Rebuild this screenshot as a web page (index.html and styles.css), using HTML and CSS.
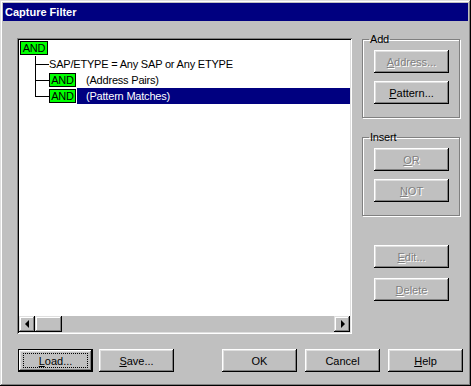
FILE: index.html
```html
<!DOCTYPE html>
<html lang="en">
<head>
    <meta charset="UTF-8">
    <title>Capture Filter</title>
    <link rel="stylesheet" href="styles.css">
</head>
<body>
    <div class="window">
        <header class="titlebar">Capture Filter</header>

        <section class="main">
            <div class="listbox">
                <div class="tree">
                    <div class="row">
                        <span class="op">AND</span>
                    </div>
                    <div class="row child">
                        <span class="branch"></span>
                        <span class="label">SAP/ETYPE = Any SAP or Any ETYPE</span>
                    </div>
                    <div class="row child">
                        <span class="branch"></span>
                        <span class="op">AND</span>
                        <span class="label item">(Address Pairs)</span>
                    </div>
                    <div class="row child last">
                        <span class="branch"></span>
                        <span class="op">AND</span>
                        <span class="label item selected">(Pattern Matches)</span>
                    </div>
                </div>
                <div class="hscroll">
                    <span class="sb-btn"><i class="arrow left"></i></span>
                    <span class="sb-thumb"></span>
                    <span class="sb-track"></span>
                    <span class="sb-btn"><i class="arrow right"></i></span>
                </div>
            </div>

            <aside class="side">
                <fieldset class="group">
                    <legend>Add</legend>
                    <button class="btn" disabled><u>A</u>ddress...</button>
                    <button class="btn"><u>P</u>attern...</button>
                </fieldset>
                <fieldset class="group">
                    <legend>Insert</legend>
                    <button class="btn" disabled><u>O</u>R</button>
                    <button class="btn" disabled><u>N</u>OT</button>
                </fieldset>
                <div class="edit-actions">
                    <button class="btn" disabled><u>E</u>dit...</button>
                    <button class="btn" disabled><u>D</u>elete</button>
                </div>
            </aside>
        </section>

        <footer class="footer">
            <div class="footer-left">
                <button class="btn default"><span class="focus"><u>L</u>oad...</span></button>
                <button class="btn"><u>S</u>ave...</button>
            </div>
            <div class="footer-right">
                <button class="btn">OK</button>
                <button class="btn">Cancel</button>
                <button class="btn"><u>H</u>elp</button>
            </div>
        </footer>
    </div>
</body>
</html>
```

FILE: styles.css
```css
html{
    box-sizing: border-box;
    font-family: "Liberation Sans", Arial, sans-serif;
    font-size: 11px;
    letter-spacing: -0.2px;
}

*, *::after, *::before{
    box-sizing: inherit;
}

body{
    margin: 0;
    background-color: #c0c0c0;
}

u{
    text-decoration: underline;
    text-underline-offset: 1px;
}

.window{
    display: flex;
    flex-direction: column;
    width: 471px;
    height: 386px;
    padding: 3px;
    background-color: #c0c0c0;
    box-shadow: inset -1px -1px #000, inset 1px 1px #dfdfdf, inset -2px -2px #808080, inset 2px 2px #fff;
}

.titlebar{
    height: 18px;
    padding-left: 2px;
    line-height: 18px;
    font-weight: bold;
    letter-spacing: 0;
    color: #fff;
    background-color: #000080;
}

/* listbox + right column */

.main{
    display: flex;
    align-items: flex-start;
    padding: 12px 0 0 14px;
}

.listbox{
    display: flex;
    flex-direction: column;
    width: 335px;
    height: 296px;
    margin-top: 5px;
    padding: 2px;
    background-color: #fff;
    box-shadow: inset 1px 1px #808080, inset -1px -1px #fff, inset 2px 2px #000, inset -2px -2px #dfdfdf;
}

.tree{
    flex-grow: 1;
    padding-left: 1px;
}

.row{
    display: flex;
    align-items: center;
    height: 16px;
    line-height: 16px;
}

.row.child{
    padding-left: 15px;
}

.branch{
    align-self: stretch;
    width: 14px;
    background:
        linear-gradient(#000, #000) 0 0 / 1px 100% no-repeat,
        linear-gradient(#000, #000) 0 8px / 100% 1px no-repeat;
}

.row.last .branch{
    background-size: 1px 9px, 100% 1px;
}

.op{
    width: 27px;
    height: 14px;
    line-height: 12px;
    text-align: center;
    border: 1px solid #000;
    background-color: #00ff00;
}

.row:first-child .op{
    width: 28px;
}

.item{
    margin-left: 1px;
    padding-left: 9px;
    flex-grow: 1;
}

.selected{
    color: #fff;
    background-color: #000080;
}

.hscroll{
    display: flex;
    height: 16px;
    background-color: #c0c0c0;
}

.sb-btn, .sb-thumb{
    display: flex;
    align-items: center;
    justify-content: center;
    width: 16px;
    background-color: #c0c0c0;
    box-shadow: inset -1px -1px #000, inset 1px 1px #dfdfdf, inset -2px -2px #808080, inset 2px 2px #fff;
}

.sb-thumb{
    width: 27px;
}

.sb-track{
    flex-grow: 1;
}

.arrow{
    width: 0;
    height: 0;
    border-top: 4px solid transparent;
    border-bottom: 4px solid transparent;
}

.arrow.left{
    border-right: 4px solid #000;
    margin-left: -1px;
}

.arrow.right{
    border-left: 4px solid #000;
    margin-left: 1px;
}

/* right column */

.side{
    display: flex;
    flex-direction: column;
    margin-left: 10px;
    width: 98px;
}

.group{
    display: flex;
    flex-direction: column;
    gap: 8px;
    margin: 0;
    padding: 4px 10px 13px 11px;
    border: 1px solid #808080;
    box-shadow: 1px 1px #fff, inset 1px 1px #fff;
}

.group + .group{
    margin-top: 13px;
}

.group legend{
    margin-left: -5px;
    padding: 0 1px;
    line-height: 13px;
}

.edit-actions{
    display: flex;
    flex-direction: column;
    gap: 10px;
    margin-top: 29px;
    padding-left: 12px;
}

/* buttons */

.btn{
    display: flex;
    align-items: center;
    justify-content: center;
    width: 75px;
    height: 23px;
    padding: 0;
    font: inherit;
    color: #000;
    border: none;
    background-color: #c0c0c0;
    box-shadow: inset -1px -1px #000, inset 1px 1px #fff, inset -2px -2px #808080, inset 2px 2px #dfdfdf;
}

.btn:disabled{
    color: #808080;
    text-shadow: 1px 1px #fff;
}

.btn.default{
    border: 1px solid #000;
}

.focus{
    display: flex;
    align-items: center;
    justify-content: center;
    width: 65px;
    height: 15px;
    border: 1px dotted #000;
}

/* footer */

.footer{
    display: flex;
    padding: 15px 0 0 15px;
}

.footer-left{
    display: flex;
    gap: 6px;
}

.footer-right{
    display: flex;
    gap: 8px;
    margin-left: 48px;
}
```
